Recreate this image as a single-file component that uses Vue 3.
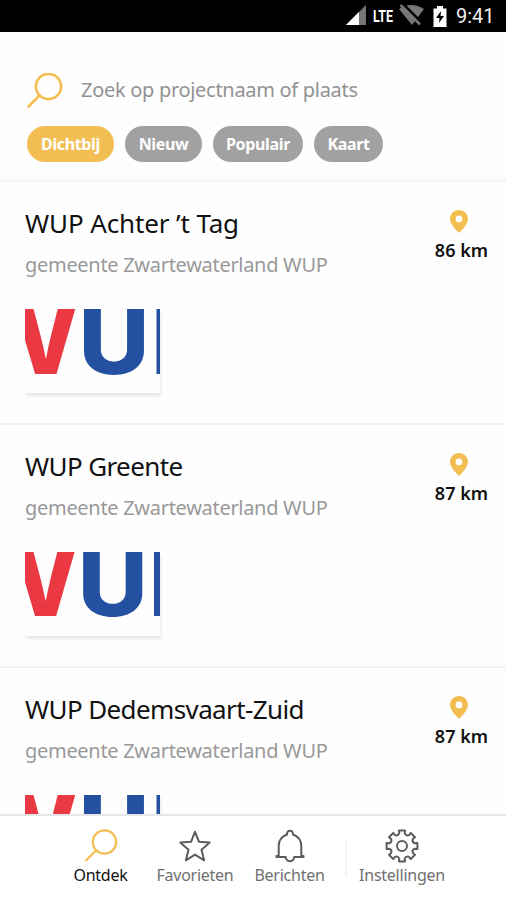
<template>
  <div class="app">
    <div class="status-bar">
      <svg class="status-icons" width="102" height="32" viewBox="0 0 102 32">
        <path d="M16 25 36 5v20z" fill="#777" />
        <path d="M16 25 29 12V25z" fill="#fff" />
        <text x="43" y="22" class="lte" textLength="20" lengthAdjust="spacingAndGlyphs">LTE</text>
        <path d="M69 9Q81 1 94 9L82 25z" fill="#777" />
        <path d="M73 4 94 25" stroke="#000" stroke-width="2.500" />
        <path d="M70.500 5 90 24.500" stroke="#777" stroke-width="2.500" />
      </svg>
      <svg class="battery" width="14" height="21" viewBox="0 0 14 21">
        <path d="M1 2.500h3V0h6v2.500h3.500V21H.5V2.500z" fill="#fff" />
        <path d="M8 5 3 12h3.500L6 17l5-7H7.500z" fill="#000" />
      </svg>
      <span class="time">9:41</span>
    </div>

    <header class="header">
      <div class="search">
        <svg class="search-icon" width="36" height="36" viewBox="0 0 36 36">
          <circle cx="21.500" cy="13.500" r="12.600" />
          <path d="M12.500 22.500 1.500 33.500" />
        </svg>
        <span class="placeholder">Zoek op projectnaam of plaats</span>
      </div>
      <div class="filters">
        <button
          v-for="filter in filters"
          :key="filter.label"
          :class="['filter', `filter--${filter.name}`, { 'filter--active': filter.name === active }]"
          @click="active = filter.name"
        >
          {{ filter.label }}
        </button>
      </div>
    </header>

    <main class="list">
      <article v-for="project in projects" :key="project.name" class="project">
        <div class="info">
          <h2 :class="['title', `title--${project.id}`]">{{ project.name }}</h2>
          <p class="place">gemeente Zwartewaterland WUP</p>
          <svg class="logo" width="135" height="84" viewBox="0 0 135 84">
            <g :transform="project.logo">
              <text x="-11" y="65" class="logo-red" textLength="63" lengthAdjust="spacingAndGlyphs">V</text>
              <text x="53.500" y="65" textLength="71" lengthAdjust="spacingAndGlyphs">U</text>
              <text :x="project.lastLetter" y="65">P</text>
            </g>
          </svg>
        </div>
        <div class="distance">
          <svg width="18" height="23" viewBox="0 0 18 23">
            <path
              fill-rule="evenodd"
              fill="#f3bd4f"
              d="M9 0C4 0 0 4 0 8.800 0 15 9 23 9 23s9-8 9-14.200C18 4 14 0 9 0zm0 5.500a3.400 3.400 0 1 1 0 6.800 3.400 3.400 0 0 1 0-6.800z"
            />
          </svg>
          <span>{{ project.distance }}</span>
        </div>
      </article>
    </main>

    <nav class="nav">
      <a class="tab tab--active">
        <svg width="34" height="34" viewBox="0 0 34 34">
          <circle cx="20.500" cy="13" r="11.700" />
          <path d="M12 21.500 1.500 32" />
        </svg>
        <span>Ontdek</span>
      </a>
      <a class="tab tab--favorites">
        <svg width="34" height="34" viewBox="0 0 34 34">
          <path d="m17 2.800 4 10 10.700.8-8.200 7.200 2.600 10.500L17 25.600l-9.100 5.700 2.600-10.500-8.200-7.200 10.700-.8z" />
        </svg>
        <span>Favorieten</span>
      </a>
      <a class="tab tab--messages">
        <svg width="34" height="34" viewBox="0 0 34 34">
          <path d="M14 5.500C13.500.500 20.500.500 20 5.500c5.500 2 8.300 6 8.300 11.500v10h2.200v1h-9.300c-.5 5.500-8 5.500-8.500 0H3.500v-1h2.200V17c0-5.500 2.800-9.500 8.300-11.500z" />
        </svg>
        <span>Berichten</span>
      </a>
      <i class="divider"></i>
      <a class="tab tab--settings">
        <svg width="34" height="34" viewBox="0 0 34 34">
          <path :d="gearPath" />
          <circle cx="17" cy="17" r="5" />
        </svg>
        <span>Instellingen</span>
      </a>
    </nav>
  </div>
</template>

<script setup>
import { ref } from 'vue'

const active = ref('nearby')

const filters = [
  { name: 'nearby', label: 'Dichtbij' },
  { name: 'new', label: 'Nieuw' },
  { name: 'popular', label: 'Populair' },
  { name: 'map', label: 'Kaart' }
]

const projects = [
  { id: 'achter', name: 'WUP Achter ’t Tag', distance: '86 km', logo: '', lastLetter: 126.5 },
  { id: 'greente', name: 'WUP Greente', distance: '87 km', logo: 'scale(.985)', lastLetter: 126 },
  { id: 'dedemsvaart', name: 'WUP Dedemsvaart-Zuid', distance: '87 km', logo: '', lastLetter: 126.5 }
]

// Eight teeth, each one an outer edge followed by a rounded notch
const point = (radius, degrees) => {
  const angle = (degrees * Math.PI) / 180
  return `${(17 + radius * Math.cos(angle)).toFixed(2)} ${(17 + radius * Math.sin(angle)).toFixed(2)}`
}

const gearPath = Array.from({ length: 8 }, (_, i) => {
  const a = i * 45
  const start = i === 0 ? 'M' : 'L'
  return `${start}${point(15.7, a - 11)}L${point(15.7, a + 11)}L${point(12.9, a + 12)}Q${point(10.6, a + 22.5)} ${point(12.9, a + 33)}`
}).join('') + 'Z'
</script>

<style>
body {
  background: #fff;
}
</style>

<style scoped>
.app {
  display: flex;
  flex-direction: column;
  width: 506px;
  height: 900px;
  overflow: hidden;
  background: #fefefe;
  font-family: "Noto Sans", sans-serif;
  color: #111;
}

.status-bar {
  display: flex;
  align-items: center;
  flex: 0 0 32px;
  box-sizing: border-box;
  padding-left: 330px;
  background: #000;
}

.status-icons {
  flex: 0 0 102px;
}

.lte {
  font: 700 17px Roboto, sans-serif;
  fill: #fff;
}

.battery {
  margin-left: 1px;
}

.time {
  margin-left: 9px;
  font: 400 20px/32px Roboto, sans-serif;
  color: #eee;
}

.header {
  flex: 0 0 150px;
  box-sizing: border-box;
  padding: 41px 27px 0;
  border-bottom: 3px solid #f6f6f6;
}

.search {
  display: flex;
  height: 36px;
}

.search-icon {
  fill: none;
  stroke: #f3bd4f;
  stroke-width: 2.6;
  stroke-linecap: round;
}

.placeholder {
  margin-left: 18px;
  font-size: 20px;
  line-height: 33px;
  letter-spacing: -0.3px;
  color: #929292;
  white-space: nowrap;
}

.filters {
  display: flex;
  gap: 11px;
  margin-top: 17px;
}

.filter {
  height: 36px;
  padding: 0 0 1px;
  border: none;
  border-radius: 18px;
  background: #a1a1a1;
  color: #fff;
  font: 700 16px "Noto Sans", sans-serif;
  letter-spacing: -0.35px;
}

.filter--active {
  background: #f3bf55;
}

.filter--nearby {
  width: 87px;
}

.filter--new {
  width: 77px;
}

.filter--popular {
  width: 90px;
}

.filter--map {
  width: 69px;
}

.list {
  flex: 1;
  min-height: 0;
  overflow: hidden;
}

.project {
  display: flex;
  justify-content: space-between;
  height: 243px;
  box-sizing: border-box;
  padding: 28px 18px 0 25px;
  border-bottom: 2px solid #f2f2f2;
}

.title {
  margin: -3px 0 0;
  font-size: 26px;
  font-weight: 400;
  line-height: 32px;
  letter-spacing: -0.62px;
  white-space: nowrap;
}

.title--achter {
  letter-spacing: -0.12px;
}

.place {
  margin: 13px 0 0;
  font-size: 20px;
  line-height: 26px;
  letter-spacing: -0.3px;
  color: #999;
  white-space: nowrap;
}

.logo {
  display: block;
  margin-top: 31px;
  box-shadow: 1px 3px 3px rgba(0, 0, 0, 0.09);
}

.logo text {
  font: 800 89px Inter, sans-serif;
  fill: #2350a0;
}

.logo .logo-red {
  font-weight: 900;
  fill: #ea3942;
}

.distance {
  display: flex;
  flex-direction: column;
  align-items: center;
  font-size: 18px;
  font-weight: 600;
  line-height: 24px;
}

.distance svg {
  margin-right: 5px;
}

.distance span {
  margin-top: 5px;
}

.nav {
  display: flex;
  flex: 0 0 86px;
  box-sizing: border-box;
  padding: 13px 0 0 66px;
  border-top: 2px solid #e6e6e6;
  background: #fff;
}

.tab {
  display: flex;
  flex-direction: column;
  align-items: center;
  width: 69px;
  font-size: 16px;
  line-height: 22px;
  letter-spacing: -0.25px;
  color: #707070;
}

.tab span {
  margin-top: 1px;
}

.tab svg {
  fill: none;
  stroke: #5c5c5c;
  stroke-width: 2;
  stroke-linejoin: round;
}

.tab--active {
  color: #111;
}

.tab--active svg {
  stroke: #f3bd4f;
  stroke-width: 2.2;
}

.tab--favorites {
  width: 120px;
}

.tab--messages {
  width: 69px;
}

.divider {
  width: 2px;
  height: 36px;
  margin: 12px 11px 0 21px;
  background: #f5f5f5;
}

.tab--settings {
  width: 88px;
}
</style>
